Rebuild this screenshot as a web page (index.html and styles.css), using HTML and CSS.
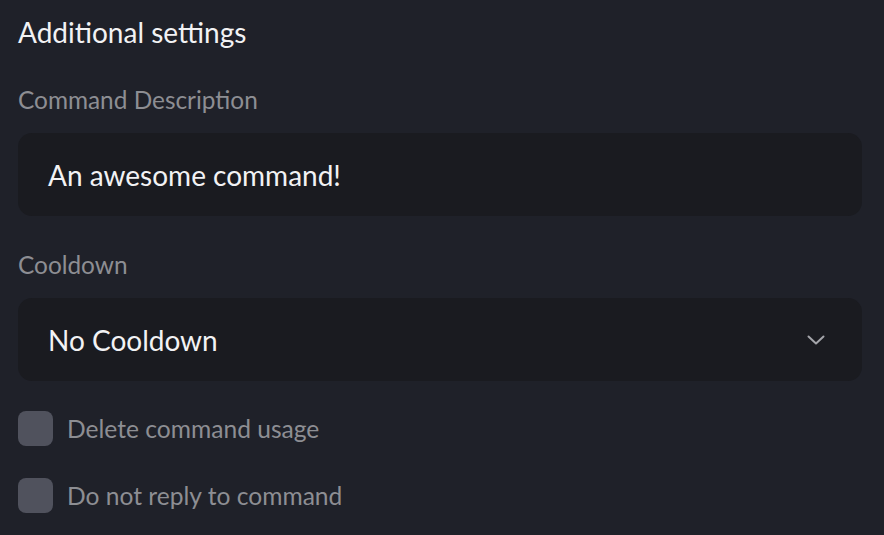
FILE: index.html
```html
<!DOCTYPE html>
<html>
<head>
<meta charset="utf-8">
<link rel="stylesheet" href="styles.css">
</head>
<body>
<div class="page">
  <h2 class="title">Additional settings</h2>
  <div class="field">
    <label class="label">Command Description</label>
    <div class="box"><span class="value">An awesome command!</span></div>
  </div>
  <div class="field field-cooldown">
    <label class="label">Cooldown</label>
    <div class="box select">
      <span class="value">No Cooldown</span>
      <svg class="chev" width="18" height="10" viewBox="0 0 18 10"><path d="M1.5 1.5 L9 8.5 L16.5 1.5" fill="none" stroke="#a4a5aa" stroke-width="2" stroke-linecap="round" stroke-linejoin="round"/></svg>
    </div>
  </div>
  <div class="check-row"><span class="check"></span><span class="check-label">Delete command usage</span></div>
  <div class="check-row"><span class="check"></span><span class="check-label">Do not reply to command</span></div>
</div>
</body>
</html>
```
FILE: styles.css
```css
html, body {
  margin: 0;
  padding: 0;
  background: #1f2129;
  width: 884px;
  height: 535px;
  overflow: hidden;
}
.page {
  font-family: Lato, "Noto Sans", sans-serif;
  padding: 14px 22px 0 18px;
  display: flex;
  flex-direction: column;
}
.title {
  margin: 0;
  font-size: 28px;
  font-weight: 400;
  line-height: 36px;
  color: #f2f2f4;
}
.field {
  display: flex;
  flex-direction: column;
  margin-top: 36px;
}
.field-cooldown {
  margin-top: 35px;
}
.label {
  font-size: 24.4px;
  line-height: 28px;
  color: #8d8e93;
}
.box {
  margin-top: 19px;
  height: 83px;
  background: #1a1b20;
  border-radius: 14px;
  display: flex;
  align-items: center;
  padding: 0 37px 0 30px;
}
.value {
  font-size: 28px;
  color: #f2f2f4;
}
.select {
  justify-content: space-between;
}
.check-row {
  display: flex;
  align-items: center;
  gap: 14px;
  margin-top: 30px;
}
.check-row + .check-row {
  margin-top: 32px;
}
.check {
  width: 35px;
  height: 35px;
  border-radius: 8px;
  background: #50525d;
}
.check-label {
  font-size: 24.6px;
  color: #8d8e93;
}
```
